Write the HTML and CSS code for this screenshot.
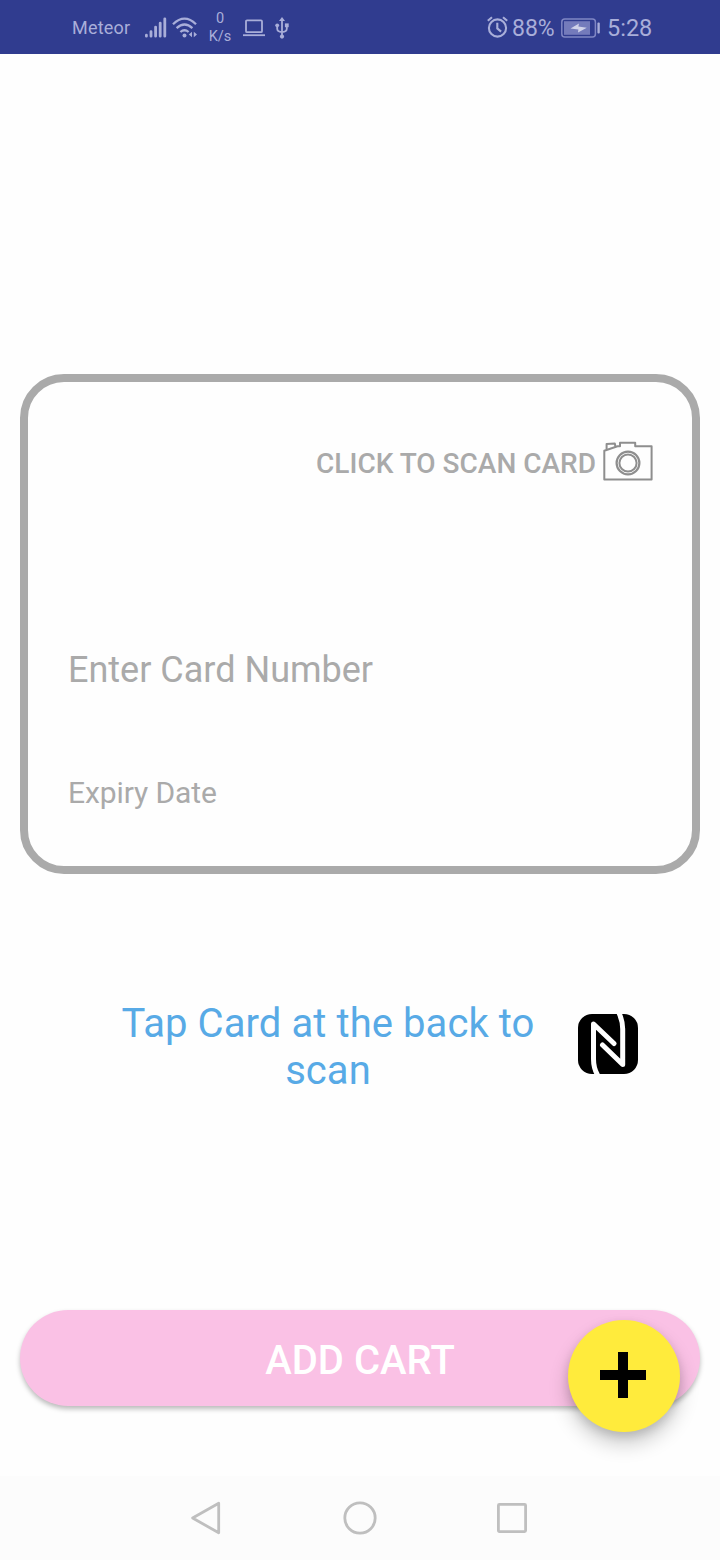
FILE: index.html
```
<!DOCTYPE html>
<html lang="en">
<head>
<meta charset="utf-8">
<title>Add card</title>
<link rel="stylesheet" href="styles.css">
</head>
<body>
<div class="screen">
  <header class="status">
    <span class="carrier">Meteor</span>
    <svg class="signal" width="24" height="24" viewBox="0 0 24 24" fill="none" stroke="currentColor" stroke-width="2.8" stroke-linecap="round">
      <path d="M2.4 19.2v1M7 15.6v4.6M11.6 11.1v9.1M16.2 7.1v13.1M20.8 2.8v17.4"/>
    </svg>
    <svg class="wifi" width="26" height="22" viewBox="0 0 26 22" fill="none" stroke="currentColor" stroke-width="2.3">
      <path d="M1 7.2Q12.5-4 24 7.2M4.6 11.2Q12.5 3.8 20.4 11.2M8.4 15Q12.5 11.4 16.6 15"/>
      <circle cx="12.5" cy="18.4" r="2" fill="currentColor" stroke="none"/>
      <path d="M20 14.8v5.4l-3.2-2.7zM21.8 14.8v5.4l3.2-2.7z" fill="currentColor" stroke="none"/>
    </svg>
    <span class="speed"><span>0</span><span>K/s</span></span>
    <svg class="laptop" width="22" height="18" viewBox="0 0 22 18" fill="none" stroke="currentColor" stroke-width="1.8">
      <rect x="3" y="1.4" width="16" height="11.8" rx="1"/><path d="M0 16.2h22"/>
    </svg>
    <svg class="usb" width="14" height="22" viewBox="0 0 14 22" fill="none" stroke="currentColor" stroke-width="1.8">
      <path d="M7 3v16M2.2 8.5v3.2Q2.2 14.6 7 15Q11.8 14.6 11.8 11.7V8.5"/>
      <path d="M7 0l3 4H4z" fill="currentColor" stroke="none"/>
      <circle cx="7" cy="19.6" r="2.1" fill="currentColor" stroke="none"/>
      <circle cx="2.2" cy="8.3" r="1.9" fill="currentColor" stroke="none"/>
      <path d="M9.9 6.4h3.8v3.8H9.9z" fill="currentColor" stroke="none"/>
    </svg>
    <svg class="alarm" width="22" height="22" viewBox="0 0 22 22" fill="none" stroke="currentColor" stroke-width="2.1">
      <circle cx="10.5" cy="12" r="8.6"/><path d="M10.3 6.8v5.6l3.8 3.2M.8 4.8L5 1.2M20.2 4.8L16 1.2"/>
    </svg>
    <span class="percent">88%</span>
    <svg class="battery" width="40" height="20" viewBox="0 0 40 20">
      <rect x=".8" y="1" width="33.6" height="18" rx="3" fill="none" stroke="#7f86c4" stroke-width="1.5"/>
      <rect x="3" y="3.2" width="26" height="13.6" fill="#747bbb"/>
      <path d="M9.5 10.4L18 5.4l-.6 3.2 8.4 1.2L17 14.4l.4-3z" fill="#d0d2e9"/>
      <rect x="36.4" y="4.5" width="2.4" height="11" rx="1" fill="#a9aed9"/>
    </svg>
    <span class="clock">5:28</span>
  </header>

  <main class="content">
    <section class="card">
      <div class="scan">
        <span>CLICK TO SCAN CARD</span>
        <svg width="50" height="40" viewBox="0 0 50 40" fill="none" stroke="#8e8e8e" stroke-width="2" stroke-linejoin="round">
          <path d="M1.300 38.400V9.800L14.500 5.200h2.500V1.800h15.200v3.400H48.600v33.200z"/>
          <path d="M3.600 8.600V3L11.800 2.500l.6 3"/>
          <circle cx="25" cy="22" r="11.400" stroke-width="2.200"/><circle cx="25" cy="22" r="8.600"/>
        </svg>
      </div>
      <div class="number">Enter Card Number</div>
      <div class="expiry">Expiry Date</div>
    </section>

    <section class="tap">
      <p class="tap-text">Tap Card at the back to scan</p>
      <svg width="62" height="62" viewBox="0 0 62 62">
        <rect x="1" y="1" width="60" height="60" rx="14"/>
        <path d="M20.500 62Q16.500 55 16.500 46V11L37 30.500M42 0Q45.700 8 45.700 16V51.500L25.500 32" fill="none" stroke="#fefefe" stroke-width="5" stroke-linecap="round" stroke-linejoin="round"/>
      </svg>
    </section>

    <div class="actions">
      <button class="add" type="button">ADD CART</button>
      <button class="fab" type="button" aria-label="Add">
        <svg width="46" height="46" viewBox="0 0 46 46"><path d="M18 0h10v18h18v10H28v18H18V28H0V18h18z"/></svg>
      </button>
    </div>
  </main>

  <nav class="nav">
    <svg width="32" height="36" viewBox="0 0 32 36"><path d="M26.700 3.200v29.600L.6 18z"/></svg>
    <svg width="36" height="36" viewBox="0 0 36 36"><circle cx="18" cy="18" r="15.2"/></svg>
    <svg width="32" height="36" viewBox="0 0 32 36"><rect x="2.4" y="4.4" width="27.2" height="27.2" rx="1"/></svg>
  </nav>
</div>
</body>
</html>
```
FILE: styles.css
```
* { box-sizing: border-box; }
body { margin: 0; font-family: Roboto, "Liberation Sans", sans-serif; background: #fefefe; }
svg { display: block; flex: none; overflow: visible; }
.screen { width: 720px; height: 1560px; display: flex; flex-direction: column; overflow: hidden; }
.status { height: 54px; flex: none; display: flex; align-items: center; padding: 2px 68px 0 72px; background: #303c8f; color: #a9aed9; white-space: nowrap; }
.carrier { width: 72px; font-size: 18px; letter-spacing: .2px; margin-top: -2px; }
.wifi { margin-left: 4px; margin-top: -1px; }
.speed { display: flex; flex-direction: column; align-items: center; width: 24px; margin-left: 10px; font-size: 14.5px; line-height: 18px; }
.laptop { margin-left: 11px; }
.usb { margin-left: 10px; }
.alarm { margin-left: auto; margin-top: -2px; }
.percent { margin-left: 3px; font-size: 23px; width: 49px; }
.battery { margin-top: -1px; }
.clock { margin-left: 6px; font-size: 23.5px; width: 45px; }
.content { flex: 1; display: flex; flex-direction: column; padding: 320px 20px 0; }
.card { height: 500px; flex: none; border: 8px solid #aaa; border-radius: 44px; padding: 59px 39px 0 40px; color: #aaa; }
.scan { display: flex; justify-content: flex-end; align-items: center; gap: 7px; height: 40px; font-size: 28px; font-weight: 500; white-space: nowrap; }
.scan span { padding-top: 4px; }
.number { margin-top: 168px; font-size: 36px; line-height: 42px; }
.expiry { margin-top: 84px; font-size: 30px; line-height: 36px; letter-spacing: -.1px; }
.tap { display: flex; align-items: center; height: 96px; margin: 125px 0 0 68px; }
.tap-text { width: 480px; margin: 0; text-align: center; font-size: 40px; line-height: 47px; letter-spacing: .08px; color: #58aae6; }
.tap svg { margin: -6px 0 0 9px; }
.actions { position: relative; margin-top: 215px; height: 96px; }
button { border: 0; padding: 0; font: inherit; }
.add { display: block; width: 680px; height: 96px; padding-top: 4px; border-radius: 48px; background: #fac1e5; color: #fff; font-size: 40px; font-weight: 500; box-shadow: 0 3px 5px #0004; }
.fab { position: absolute; right: 20px; top: 10px; width: 112px; height: 112px; padding: 0 2px 2px 0; display: grid; place-items: center; border-radius: 50%; background: #ffeb3c; box-shadow: 0 12px 20px #0003, 0 4px 10px #0002; }
.nav { height: 84px; flex: none; display: flex; align-items: center; justify-content: center; gap: 118px; background: #fcfcfc; }
.nav svg { fill: none; stroke: #bfbfbf; stroke-width: 2.8; stroke-linejoin: round; }
```
